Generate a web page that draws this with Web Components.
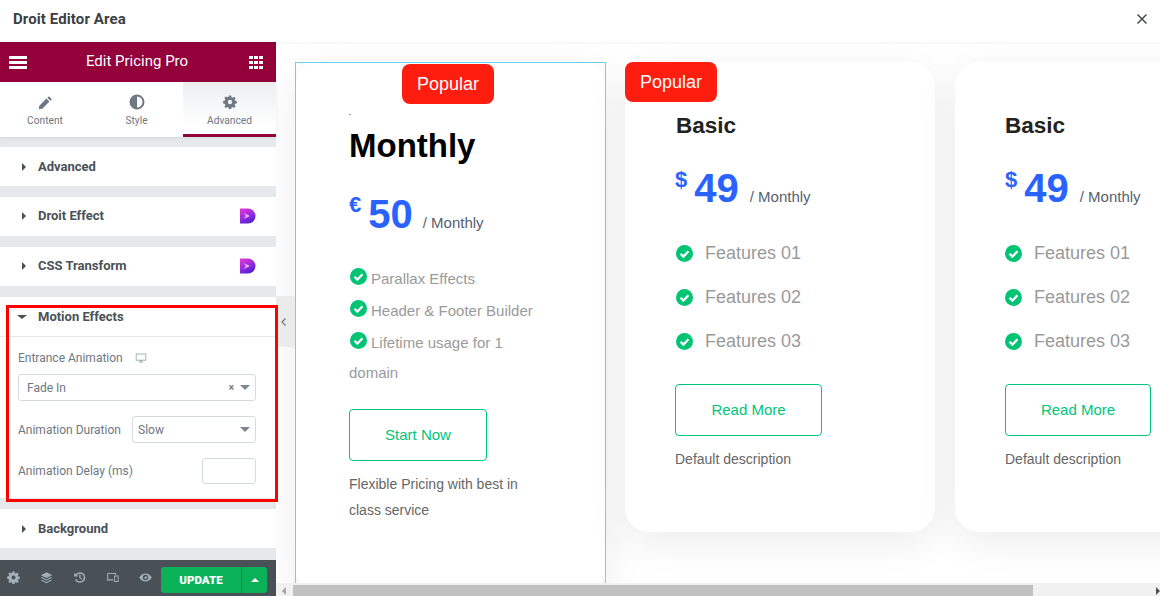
<!DOCTYPE html>
<html lang="en">
<head>
<meta charset="utf-8">
<title>Droit Editor Area</title>
<style>
  html, body { margin: 0; padding: 0; height: 100%; overflow: hidden; background: #fff; }
</style>
</head>
<body>
<editor-app>
  <edit-panel slot="panel">
    <panel-section title="Advanced"></panel-section>
    <panel-section title="Droit Effect" brand></panel-section>
    <panel-section title="CSS Transform" brand></panel-section>
    <panel-section title="Motion Effects" open highlight>
      <motion-controls></motion-controls>
    </panel-section>
    <panel-section title="Background"></panel-section>
  </edit-panel>

  <pricing-card slot="cards" selected compact badge="center" currency="€" price="50" title="Monthly" label="Start Now">
    <feature-item compact>Parallax Effects</feature-item>
    <feature-item compact>Header &amp; Footer Builder</feature-item>
    <feature-item compact>Lifetime usage for 1 domain</feature-item>
    <span slot="desc">Flexible Pricing with best in class service</span>
  </pricing-card>
  <pricing-card slot="cards" badge="left" currency="$" price="49" title="Basic" label="Read More">
    <feature-item>Features 01</feature-item>
    <feature-item>Features 02</feature-item>
    <feature-item>Features 03</feature-item>
    <span slot="desc">Default description</span>
  </pricing-card>
  <pricing-card slot="cards" currency="$" price="49" title="Basic" label="Read More" narrow>
    <feature-item flush>Features 01</feature-item>
    <feature-item flush>Features 02</feature-item>
    <feature-item flush>Features 03</feature-item>
    <span slot="desc">Default description</span>
  </pricing-card>
</editor-app>

<script>
  // Iconos compartidos
  const ICONS = {
    pencil: '<path d="M11.6 1.2l3.2 3.2-1.6 1.6L10 2.8zM9 3.8L12.2 7l-7.6 7.6L.8 15.2l.6-3.8z"/>',
    half: '<path fill-rule="evenodd" d="M8 .5a7.5 7.5 0 1 0 0 15 7.5 7.5 0 0 0 0-15zm0 2v11a5.5 5.5 0 0 1 0-11z" transform="matrix(-1 0 0 1 16 0)"/>',
    cog: '<path fill-rule="evenodd" d="M6.7.6h2.6l.4 2 1.2.5 1.7-1.1 1.8 1.8-1.1 1.7.5 1.2 2 .4v2.6l-2 .4-.5 1.2 1.1 1.7-1.8 1.8-1.7-1.1-1.2.5-.4 2H6.7l-.4-2-1.2-.5-1.7 1.1-1.8-1.8 1.1-1.7-.5-1.2-2-.4V6.7l2-.4.5-1.2L1.6 3.4l1.8-1.8 1.7 1.1 1.2-.5zM8 5.5a2.5 2.5 0 1 0 0 5 2.5 2.5 0 0 0 0-5z"/>',
    layers: '<path d="M8 1l7 3.5L8 8 1 4.500z"/><path d="M2.500 6.900L8 9.700l5.500-2.800L15 7.700 8 11.200 1 7.700z"/><path d="M2.500 10.100L8 12.900l5.500-2.800L15 10.900 8 14.500 1 10.900z"/>',
    history: '<path d="M8.500 1.500a6.500 6.500 0 1 1-6 9l1.700-.7a4.700 4.700 0 1 0 .5-4.500L6.300 6.900H1.500V2.100l1.900 1.900a6.500 6.500 0 0 1 5.100-2.500z"/><path d="M7.700 4.500h1.500v3.400l2.200 1.500-.8 1.200-2.900-2z"/>',
    devices: '<path fill-rule="evenodd" d="M1.500 2.500h11v2h-1.300v-.8H2.800v6.600h6v1.500H.5v-1.100h1zM10 5.500h5.500v8H10zm1.200 1.300v5.400h3.100V6.800z"/>',
    eye: '<path fill-rule="evenodd" d="M8 3c3.500 0 6.300 2.300 7.700 5-1.400 2.700-4.200 5-7.700 5S1.700 10.700.3 8C1.700 5.300 4.500 3 8 3zm0 1.700a3.300 3.300 0 1 0 0 6.600 3.300 3.300 0 0 0 0-6.600zm0 1.500a1.800 1.800 0 1 1-1.800 1.800c.6.400 1.800-.2 1.800-1.800z"/>',
    monitor: '<path fill-rule="evenodd" d="M1 2h14v9.500H9.500V13H11v1H5v-1h1.500v-1.500H1zm1.200 1.200v7.100h11.600V3.200z"/>'
  };

  const icon = (name, size) =>
    `<svg width="${size}" height="${size}" viewBox="0 0 16 16" fill="currentColor" aria-hidden="true">${ICONS[name]}</svg>`;

  class EditorApp extends HTMLElement {
    constructor() {
      super();
      this.attachShadow({ mode: 'open' });
      this.shadowRoot.innerHTML = `
        <style>
          :host { display: grid; grid-template-rows: 42px 1fr; width: 1160px; height: 596px; overflow: hidden;
                  font-family: Roboto, sans-serif; background: #fff; }
          .top { display: flex; align-items: center; justify-content: space-between; padding: 0 13px 5px; box-sizing: border-box; background: #fff;
                 position: relative; z-index: 3; box-shadow: 0 1px 3px rgba(0,0,0,.05); }
          .top h1 { margin: 0; font: 700 15px Roboto, sans-serif; letter-spacing: .1px; color: #3c3f42; }
          .top svg { display: block; }
          .body { display: grid; grid-template-columns: 276px minmax(0, 1fr); min-height: 0; }
          .preview { display: grid; grid-template-rows: minmax(0, 1fr) 13px; min-width: 0; min-height: 0; position: relative; }
          .stage { display: flex; align-items: flex-start; overflow: hidden; padding: 20px 0 0 19px; }
          .handle { position: absolute; left: 0; top: 254px; width: 19px; height: 51px; padding-right: 5px; box-sizing: border-box; background: #ebebeb;
                    border-radius: 0 3px 3px 0; display: flex; align-items: center; justify-content: center; z-index: 1; }
          .bar { display: flex; background: #f1f1f1; align-items: stretch; position: relative; z-index: 2; }
          .track { flex: 1; padding: 2px 127px 0 17px; }
          .thumb { height: 100%; background: #c1c1c1; }
          .arrow { position: absolute; top: 4px; width: 0; height: 0; border: 4px solid transparent; }
          .arrow.l { left: 6px; border-right-color: #a3a3a3; border-left-width: 0; }
          .arrow.r { right: 0; border-left-color: #505050; border-right-width: 0; }
        </style>
        <header class="top">
          <h1>Droit Editor Area</h1>
          <svg width="10" height="10" viewBox="0 0 10 10"><path d="M.5.5l9 9M9.500.5l-9 9" stroke="#3c3f42" stroke-width="1.400" fill="none"/></svg>
        </header>
        <div class="body">
          <slot name="panel"></slot>
          <main class="preview">
            <div class="stage"><slot name="cards"></slot></div>
            <div class="handle"><svg width="5" height="8" viewBox="0 0 5 8"><path d="M4.500.5L1 4l3.500 3.500" stroke="#6d7882" stroke-width="1.200" fill="none"/></svg></div>
            <div class="bar">
              <i class="arrow l"></i>
              <div class="track"><div class="thumb"></div></div>
              <i class="arrow r"></i>
            </div>
          </main>
        </div>`;
    }
  }

  class EditPanel extends HTMLElement {
    constructor() {
      super();
      this.attachShadow({ mode: 'open' });
      this.shadowRoot.innerHTML = `
        <style>
          :host { display: grid; grid-template-columns: minmax(0, 1fr); grid-template-rows: 40px 55px minmax(0, 1fr) 36px; background: #e6e9ec; min-height: 0; position: relative; z-index: 2; }
          .head { background: #93003a; color: #fff; display: flex; align-items: center; justify-content: space-between; padding: 0 13px 0 9px; font-size: 15px; }
          .head span { margin: 0 2px 2px 0; }
          .burger { width: 18px; height: 13px; background: linear-gradient(#fff 0 3px, transparent 3px 5px, #fff 5px 8px, transparent 8px 10px, #fff 10px 13px); }
          .apps { width: 14px; height: 13px; display: grid; grid-template-columns: repeat(3, 4px); grid-auto-rows: 3px; gap: 2px 1px; }
          .apps i { background: #fff; }
          .tabs { display: grid; grid-template-columns: 90px 93px 93px; background: #fff; box-shadow: 0 1px 3px rgba(0,0,0,.08); position: relative; }
          .tab { display: flex; flex-direction: column; align-items: center; padding-top: 12px; gap: 5px; color: #6d7882; font-size: 10.200px; line-height: 12px; box-sizing: border-box; }
          .tab.on { background: linear-gradient(#eceef0, #fff 85%); border-bottom: 3px solid #93003a; }
          .ico { height: 16px; display: flex; align-items: center; }
          .list { padding-top: 10px; display: flex; flex-direction: column; gap: 11px; min-height: 0; }
          .foot { background: #495157; color: #a4afb7; display: flex; align-items: center; justify-content: space-between; padding: 0 9px 0 7px; }
          .tools { display: flex; gap: 20px; }
          .tool { display: flex; flex: none; width: 13px; justify-content: center; }
          .update { flex: none; display: flex; height: 26px; margin-top: 3px; border-radius: 3px; overflow: hidden; background: #0bb158; color: #fff; font-weight: 700; font-size: 11.500px; }
          .update b { width: 80px; display: flex; align-items: center; justify-content: center; border-right: 1px solid #0a8a46; }
          .update span { width: 25px; display: flex; align-items: center; justify-content: center; }
          .update span::before { content: ''; border: 4px solid transparent; border-top: 0; border-bottom: 4px solid #fff; }
        </style>
        <div class="head">
          <div class="burger"></div>
          <span>Edit Pricing Pro</span>
          <div class="apps">${'<i></i>'.repeat(9)}</div>
        </div>
        <nav class="tabs">
          <div class="tab"><span class="ico">${icon('pencil', 15)}</span>Content</div>
          <div class="tab"><span class="ico">${icon('half', 16)}</span>Style</div>
          <div class="tab on"><span class="ico">${icon('cog', 14)}</span>Advanced</div>
        </nav>
        <div class="list"><slot></slot></div>
        <footer class="foot">
          <div class="tools">
            <span class="tool">${icon('cog', 13)}</span>
            <span class="tool">${icon('layers', 14)}</span>
            <span class="tool">${icon('history', 13)}</span>
            <span class="tool">${icon('devices', 13)}</span>
            <span class="tool">${icon('eye', 13)}</span>
          </div>
          <div class="update"><b>UPDATE</b><span></span></div>
        </footer>`;
    }
  }

  class PanelSection extends HTMLElement {
    constructor() {
      super();
      this.attachShadow({ mode: 'open' });
    }

    connectedCallback() {
      const open = this.hasAttribute('open');
      this.shadowRoot.innerHTML = `
        <style>
          :host { display: block; background: #fff; position: relative; }
          .row { height: 39px; display: flex; align-items: center; padding: 0 20px 0 22px; font: 700 13px Roboto, sans-serif; color: #495157; box-sizing: border-box; }
          :host([brand]) .row { padding-bottom: 2px; }
          :host([open]) .row { height: 40px; border-bottom: 1px solid #e6e9ec; padding-left: 17px; }
          .tri { width: 0; height: 0; border: 4px solid transparent; border-right: 0; border-left: 4px solid #495157; margin-right: 12px; }
          :host([open]) .tri { border: 4px solid transparent; border-bottom: 0; border-top: 4px solid #495157; border-left-width: 5px; border-right-width: 5px; margin-right: 11px; }
          .title { flex: 1; }
          .mark { position: absolute; left: 6px; top: 8px; width: 272px; height: 197px; border: 3px solid #f00; box-sizing: border-box; pointer-events: none; }
        </style>
        <div class="row"><i class="tri"></i><span class="title">${this.getAttribute('title')}</span>
          ${this.hasAttribute('brand') ? `<svg width="16" height="16" viewBox="0 0 16 16">
            <defs><linearGradient id="g" x1="0" y1="0" x2=".5" y2="1"><stop offset="0" stop-color="#e63ccf"/><stop offset=".55" stop-color="#a02be0"/><stop offset="1" stop-color="#5523cf"/></linearGradient></defs>
            <path fill="url(#g)" d="M0 .5h8a7.500 7.500 0 0 1 0 15H0z"/><path fill="#e9b8ff" d="M3.500 5L10 8l-6.500 3L6 8z"/></svg>` : ''}
        </div>
        ${open ? '<slot></slot>' : ''}
        ${this.hasAttribute('highlight') ? '<div class="mark"></div>' : ''}`;
    }
  }

  class MotionControls extends HTMLElement {
    constructor() {
      super();
      this.attachShadow({ mode: 'open' });
      this.shadowRoot.innerHTML = `
        <style>
          :host { display: flex; flex-direction: column; padding: 12px 20px 14px 18px; height: 161px; box-sizing: border-box;
                  font: 12px Roboto, sans-serif; color: #6d7882; }
          .lab { display: flex; align-items: center; gap: 12px; height: 18px; }
          .box { border: 1px solid #d5dadf; border-radius: 3px; box-sizing: border-box; height: 27px; display: flex; align-items: center; padding-left: 8px; }
          .wide { margin-top: 7px; }
          .line { display: flex; align-items: center; justify-content: space-between; }
          .dur { margin-top: 15px; }
          .dur .box { width: 124px; padding-left: 5px; }
          .del { margin-top: 15px; }
          .del .box { width: 54px; height: 26px; }
          .x { margin-left: auto; color: #6d7882; font-size: 10px; font-weight: 700; }
          .caret { width: 0; height: 0; border: 5px solid transparent; border-bottom: 0; border-top: 5px solid #7d8790; margin-right: 5px; }
          .x + .caret { margin-left: 6px; }
          .dur .caret { margin-left: auto; }
        </style>
        <div class="lab">Entrance Animation <span style="display:flex;color:#a4afb7">${icon('monitor', 12)}</span></div>
        <div class="box wide">Fade In<span class="x">×</span><i class="caret"></i></div>
        <div class="line dur"><span>Animation Duration</span><div class="box">Slow<i class="caret"></i></div></div>
        <div class="line del"><span>Animation Delay (ms)</span><div class="box"></div></div>`;
    }
  }

  class FeatureItem extends HTMLElement {
    constructor() {
      super();
      this.attachShadow({ mode: 'open' });
      this.shadowRoot.innerHTML = `
        <style>
          :host { display: flex; align-items: center; gap: 12px; height: 44px; padding-left: 1px; font-size: 18px; color: #9a9a9a; }
          :host([flush]) { padding-left: 0; }
          :host([compact]) { display: block; height: auto; padding-left: 0; font-size: 15px; line-height: 30px; margin-bottom: 2px; }
          svg { flex: none; width: 17px; height: 17px; }
          :host([compact]) svg { vertical-align: -1px; margin: 0 4px 0 1px; }
        </style>
        <svg viewBox="0 0 18 18"><circle cx="9" cy="9" r="9" fill="#00c474"/><path d="M4.800 9.300l3 3 5.400-5.600" stroke="#fff" stroke-width="2.400" fill="none"/></svg><slot></slot>`;
    }
  }

  class PricingCard extends HTMLElement {
    constructor() {
      super();
      this.attachShadow({ mode: 'open' });
    }

    connectedCallback() {
      const a = (n) => this.getAttribute(n);
      const badge = a('badge');
      this.shadowRoot.innerHTML = `
        <style>
          :host { display: block; flex: none; position: relative; box-sizing: border-box; width: 310px; height: 470px; margin-right: 20px;
                  padding: 51px 0 0 50px; background: #fff; border-radius: 24px; box-shadow: 0 10px 40px rgba(0,0,0,.08);
                  font-family: "Liberation Sans", Arial, sans-serif; }
          :host([compact]) { width: 311px; height: 530px; margin-right: 19px; padding: 52px 60px 0 54px; }
          :host([narrow]) { margin-right: 0; }
          .outline { position: absolute; left: 0; top: 0; right: 0; height: 540px; border: 1px solid #6fd0ee; box-sizing: border-box; pointer-events: none; }
          .badge { position: absolute; width: 92px; height: 40px; border-radius: 8px; background: #ff1d0f; color: #fff; font-size: 18px;
                   display: flex; align-items: center; justify-content: center; }
          .badge.center { left: 107px; top: 2px; }
          .badge.left { left: 0; top: 0; }
          .dash { width: 2px; height: 1px; background: #999; margin-bottom: 11px; }
          h2 { margin: 0 0 0 1px; font-size: 22.500px; line-height: 26px; color: #222; }
          :host([compact]) h2, :host([narrow]) h2 { margin-left: 0; }
          :host([compact]) h2 { font-size: 33px; line-height: 40px; color: #000; }
          .price { display: flex; align-items: baseline; margin-top: 26px; color: #2962ff; font-weight: 700; height: 46px; }
          :host([compact]) .price { margin-top: 25px; }
          .cur { font-size: 22px; line-height: 22px; align-self: flex-start; margin-right: 7px; margin-top: 4px; }
          :host([compact]) .cur { margin-top: 3px; }
          .num { font-size: 40px; line-height: 46px; }
          .per { font: 400 15px "Liberation Sans", Arial, sans-serif; color: #555f70; margin-left: 11px; }
          :host([compact]) .per { margin-left: 10px; }
          .list { margin-top: 20px; }
          :host([compact]) .list { margin-top: 27px; }
          .btn { display: flex; align-items: center; justify-content: center; box-sizing: border-box; width: 147px; height: 52px; margin-top: 21px; padding-bottom: 1px;
                 border: 1px solid #00c67a; border-radius: 4px; color: #00c67a; font-size: 15px; }
          :host([compact]) .btn { width: 138px; }
          :host([narrow]) .btn { width: 146px; }
          .desc { margin-top: 10px; font-size: 14px; line-height: 26px; color: #666; }
        </style>
        ${a('badge') ? `<div class="badge ${badge}">Popular</div>` : ''}
        ${this.hasAttribute('compact') ? '<div class="dash"></div>' : ''}
        <h2>${a('title')}</h2>
        <div class="price"><span class="cur">${a('currency')}</span><span class="num">${a('price')}</span><span class="per">/ Monthly</span></div>
        <div class="list"><slot></slot></div>
        <div class="btn">${a('label')}</div>
        <div class="desc"><slot name="desc"></slot></div>
        ${this.hasAttribute('selected') ? '<div class="outline"></div>' : ''}`;
    }
  }

  customElements.define('editor-app', EditorApp);
  customElements.define('edit-panel', EditPanel);
  customElements.define('panel-section', PanelSection);
  customElements.define('motion-controls', MotionControls);
  customElements.define('feature-item', FeatureItem);
  customElements.define('pricing-card', PricingCard);
</script>
</body>
</html>
